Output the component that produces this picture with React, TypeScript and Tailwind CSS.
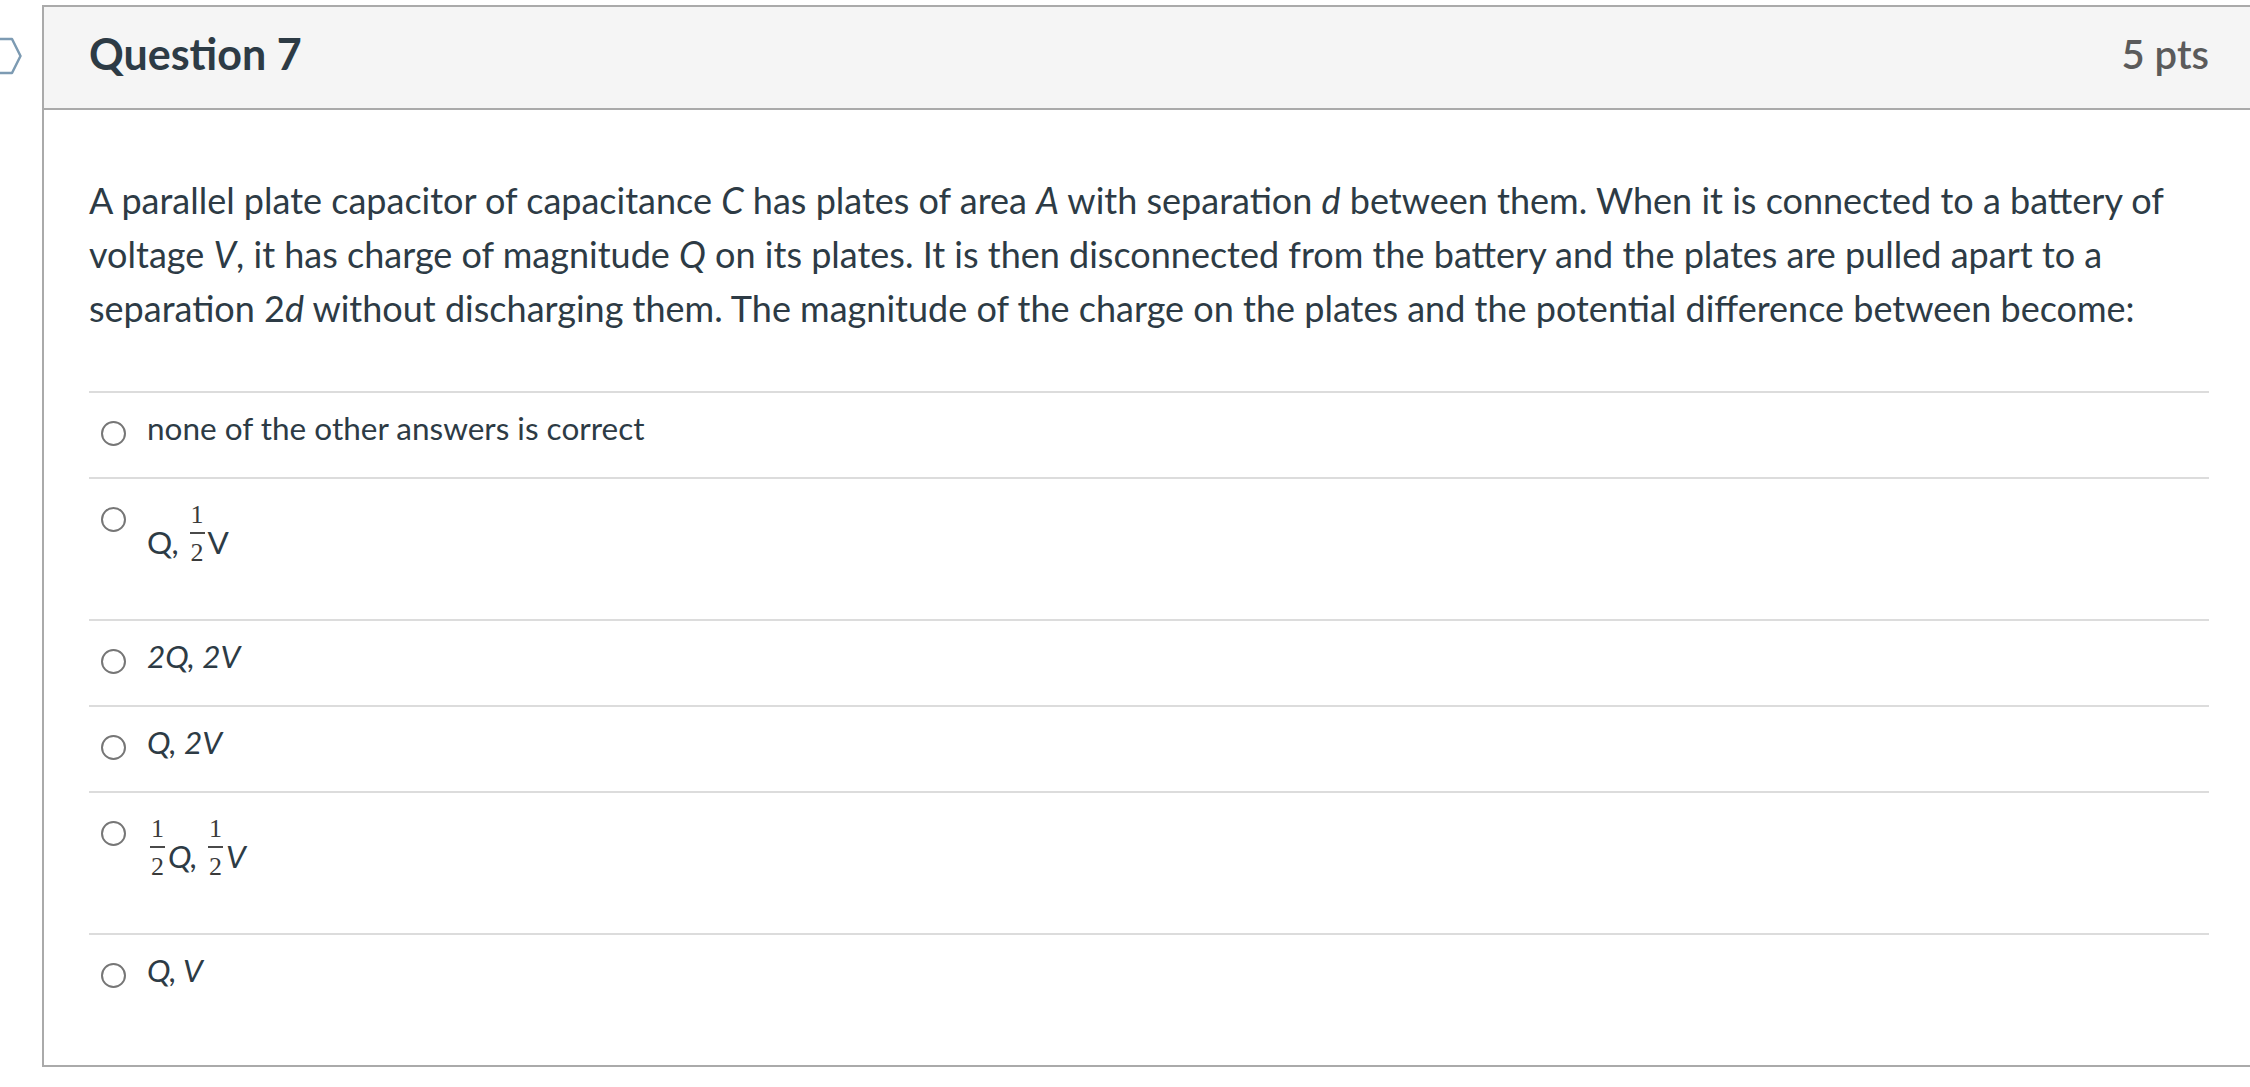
import React from "react";

function Frac() {
  return (
    <span className="inline-block overflow-hidden h-[103px] align-[-40px] px-[3px] pt-[11px]">
      <span className="flex flex-col items-center font-['Liberation_Serif',serif] text-[26px] leading-[26px] text-[#3a3a3a] not-italic">
        <span>1</span>
        <span className="mt-[4px] h-[2px] w-[15px] bg-[#4a4a4a]" />
        <span className="mt-[6px]">2</span>
      </span>
    </span>
  );
}

function Radio() {
  return (
    <span className="mt-[16px] ml-[12px] h-[25px] w-[25px] shrink-0 rounded-full border-2 border-[#767676] bg-white" />
  );
}

function Row({ children }: { children: React.ReactNode }) {
  return (
    <div className="flex items-start gap-[21px] border-t-2 border-[#dcdcdc] pt-[12px] pb-[25px]">
      <Radio />
      <div className="text-[31.5px] leading-[47px] text-[#2d3b45]">{children}</div>
    </div>
  );
}

export default function App() {
  return (
    <div className="w-[2250px] h-[1087px] overflow-hidden bg-white flex pt-[5px] font-['Lato',sans-serif]">
      <div className="w-[42px] shrink-0">
        <svg className="mt-[32px]" width="24" height="38" viewBox="0 0 24 38" fill="none">
          <path
            d="M-6 2 H12 L20.5 19 L12 36 H-6"
            stroke="#7d9bb3"
            strokeWidth="2.5"
            strokeLinejoin="round"
          />
        </svg>
      </div>
      <div className="w-[2214px] shrink-0 self-start border-2 border-[#aaaaaa]">
        <div className="h-[103px] bg-[#f5f5f5] border-b-2 border-[#aaaaaa] flex items-center justify-between px-[45px] pb-[8px]">
          <div className="text-[43px] font-bold text-[#2d3b45] leading-none">Question 7</div>
          <div className="text-[40px] font-semibold text-[#5b5b5b] leading-none">5 pts</div>
        </div>
        <div className="px-[45px] pt-[63px] pb-[46px]">
          <div className="text-[36px] leading-[54px] text-[#2d3b45]">
            A parallel plate capacitor of capacitance <i>C</i> has plates of area <i>A</i> with separation <i>d</i> between them. When it is connected to a battery of voltage <i>V</i>, it has charge of magnitude <i>Q</i> on its plates. It is then disconnected from the battery and the plates are pulled apart to a separation 2<i>d</i> without discharging them. The magnitude of the charge on the plates and the potential difference between become:
          </div>
          <div className="mt-[56px]">
            <Row>none of the other answers is correct</Row>
            <Row>
              Q, <Frac />V
            </Row>
            <Row>
              <i>2Q, 2V</i>
            </Row>
            <Row>
              <i>Q, 2V</i>
            </Row>
            <Row>
              <Frac />
              <i>Q, </i>
              <Frac />
              <i>V</i>
            </Row>
            <Row>
              <i>Q, V</i>
            </Row>
          </div>
        </div>
      </div>
    </div>
  );
}
